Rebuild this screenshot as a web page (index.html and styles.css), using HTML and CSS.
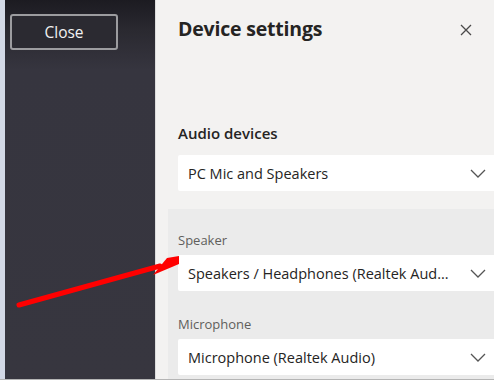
FILE: index.html
```html
<!DOCTYPE html>
<html>
<head>
<meta name="viewport" content="width=device-width, initial-scale=1.0">
<link rel="stylesheet" href="styles.css">
</head>
<body>

<div class="screen">

  <!--dark side of the call window-->
  <div class="stage">
    <div class="edge"></div>
    <div class="stage-main">
      <button class="close-btn">Close</button>
    </div>
  </div>

  <!--settings panel-->
  <div class="panel">
    <div class="panel-head">
      <h1>Device settings</h1>
      <svg class="x-icon" width="14" height="14" viewBox="0 0 14 14">
        <path d="M2 2 L12 12 M12 2 L2 12" stroke="#4a4a4a" stroke-width="1.3" fill="none"/>
      </svg>
    </div>

    <h2>Audio devices</h2>
    <div class="select first">
      <span>PC Mic and Speakers</span>
      <svg class="chev" width="16" height="9" viewBox="0 0 16 9">
        <path d="M1 1 L8 8 L15 1" stroke="#555" stroke-width="1.3" fill="none"/>
      </svg>
    </div>

    <div class="group">
      <div class="label">Speaker</div>
      <div class="select">
        <span>Speakers / Headphones (Realtek Aud...</span>
        <svg class="chev" width="16" height="9" viewBox="0 0 16 9">
          <path d="M1 1 L8 8 L15 1" stroke="#555" stroke-width="1.3" fill="none"/>
        </svg>
      </div>

      <div class="label">Microphone</div>
      <div class="select">
        <span>Microphone (Realtek Audio)</span>
        <svg class="chev" width="16" height="9" viewBox="0 0 16 9">
          <path d="M1 1 L8 8 L15 1" stroke="#555" stroke-width="1.3" fill="none"/>
        </svg>
      </div>
    </div>
  </div>

  <!--red arrow drawn over the screenshot-->
  <svg class="arrow" width="494" height="380" viewBox="0 0 494 380">
    <line x1="19" y1="305" x2="160" y2="266" stroke="#f00" stroke-width="5" stroke-linecap="round"/>
    <polygon points="153,275 167,258 179,256 179,264" fill="#f00"/>
  </svg>

</div>

</body>
</html>
```

FILE: styles.css
```css
* {box-sizing: border-box;}

body{
  margin:0px;
  font-family:"Open Sans", "Noto Sans", sans-serif;
}

.screen{
  position:relative;
  width:494px;
  height:380px;
  display:flex;
  overflow:hidden;
  border-bottom:1px solid #b5b5b5;
}

/*left side*/

.stage{
  width:155px;
  display:flex;
  flex-shrink:0;
}

.edge{
  width:5px;
  background:#d3d9e6;
}

.stage-main{
  flex:1;
  background:linear-gradient(#1c1b21 0px, #2a2930 30px, #36353f 70px, #37363f 100%);
  padding:14px 0px 0px 5px;
}

.close-btn{
  width:108px;
  height:36px;
  background:#2b2a31;
  border:2px solid #9c9c9f;
  border-radius:3px;
  color:#f2f2f2;
  font-family:"Open Sans", sans-serif;
  font-size:15.5px;
}

/*right side*/

.panel{
  flex:1;
  background:#f3f2f1;
  border-left:1px solid #dcdcdc;
  padding-left:22px;
  color:#252423;
}

.panel-head{
  display:flex;
  justify-content:space-between;
  align-items:center;
  height:56px;
  padding-right:21px;
}

h1{
  margin:0px;
  font-size:19.5px;
  font-weight:700;
  letter-spacing:-0.2px;
}

.x-icon{
  margin-top:4px;
}

h2{
  margin:67px 0px 0px 0px;
  font-size:15px;
  font-weight:600;
  line-height:20px;
}

.select{
  height:36px;
  background:#fff;
  display:flex;
  align-items:center;
  justify-content:space-between;
  padding:0px 8px 0px 10px;
  font-size:14.5px;
  color:#252423;
  white-space:nowrap;
  border-radius:2px 0px 0px 2px;
}

.select.first{
  margin-top:12px;
}

.chev{
  flex-shrink:0;
}

.group{
  background:#ebebeb;
  margin:18px 0px 0px -10px;
  padding:22px 0px 0px 10px;
  height:170px;
}

.label{
  font-size:13px;
  color:#605e5c;
  line-height:18px;
  margin-bottom:6px;
}

.group .select + .label{
  margin-top:24px;
}

.arrow{
  position:absolute;
  left:0px;
  top:0px;
}
```
